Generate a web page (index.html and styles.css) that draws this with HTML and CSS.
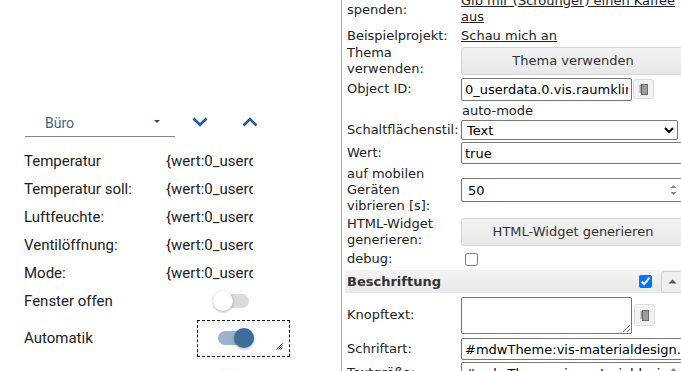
FILE: index.html
```html
<!DOCTYPE html>
<html lang="de">
  <head>
    <meta charset="UTF-8" />
    <meta name="viewport" content="width=device-width, initial-scale=1.0" />
    <title>Raumklima</title>
    <link rel="stylesheet" href="styles.css">
  </head>
  <body>
    <div class="app">
      <!-- Vorschau des Views -->
      <div class="view">
        <div class="room-bar">
          <div class="room-select">
            <span>Büro</span>
            <span class="caret"></span>
          </div>
          <button class="nav-btn">
            <svg width="16" height="10" viewBox="0 0 16 10"><polyline points="1.5,1.5 8,8 14.5,1.5" /></svg>
          </button>
          <button class="nav-btn">
            <svg width="16" height="10" viewBox="0 0 16 10"><polyline points="1.5,8.5 8,2 14.5,8.5" /></svg>
          </button>
        </div>

        <div class="rows">
          <div class="row"><span class="name">Temperatur</span><span class="val">{wert:0_userdata.0.vis.raumklima.buero.temperatur}</span></div>
          <div class="row"><span class="name">Temperatur soll:</span><span class="val">{wert:0_userdata.0.vis.raumklima.buero.soll}</span></div>
          <div class="row"><span class="name">Luftfeuchte:</span><span class="val">{wert:0_userdata.0.vis.raumklima.buero.feuchte}</span></div>
          <div class="row"><span class="name">Ventilöffnung:</span><span class="val">{wert:0_userdata.0.vis.raumklima.buero.ventil}</span></div>
          <div class="row"><span class="name">Mode:</span><span class="val">{wert:0_userdata.0.vis.raumklima.buero.mode}</span></div>
          <div class="row"><span class="name">Fenster offen</span><span class="switch switch-free"></span></div>
          <div class="row row-tall">
            <span class="name">Automatik</span>
            <div class="widget-sel">
              <span class="switch on"></span>
              <svg class="grip" width="7" height="7" viewBox="0 0 7 7"><path d="M6.5 0.5 L0.5 6.5 M6.5 2.5 L2.5 6.5 M6.5 4.5 L4.5 6.5" /></svg>
            </div>
          </div>
          <div class="row row-last"><span class="name">Sperre über Fenster</span><span class="switch switch-last"></span></div>
        </div>
      </div>

      <!-- Widget-Eigenschaften -->
      <div class="inspector">
        <div class="attrs">
          <div class="attr attr-donate">
            <span class="label">Entwickler spenden:</span>
            <span class="value"><a href="#">Gib mir (Scrounger) einen Kaffee aus</a></span>
          </div>
          <div class="attr attr-link">
            <span class="label">Beispielprojekt:</span>
            <span class="value"><a href="#">Schau mich an</a></span>
          </div>
          <div class="attr attr-button">
            <span class="label">Thema verwenden:</span>
            <span class="value"><button class="ui-btn">Thema verwenden</button></span>
          </div>
          <div class="attr attr-oid">
            <span class="label">Object ID:</span>
            <span class="value">
              <input class="field field-short" value="0_userdata.0.vis.raumklima.buero.automatik">
              <button class="pick-btn">
                <svg width="9" height="11" viewBox="0 0 9 11"><rect x="2.5" y="0.5" width="6" height="10" fill="#9c9c9c" stroke="#6a6a6a" /><path d="M0.5 2 H2.5 M0.5 4 H2.5 M0.5 6 H2.5 M0.5 8 H2.5" stroke="#555" /></svg>
              </button>
            </span>
          </div>
          <div class="attr attr-note">
            <span class="label"></span>
            <span class="value note">auto-mode</span>
          </div>
          <div class="attr attr-select">
            <span class="label">Schaltflächenstil:</span>
            <span class="value">
              <select class="field-select"><option>Text</option><option>Icon</option></select>
            </span>
          </div>
          <div class="attr attr-input">
            <span class="label">Wert:</span>
            <span class="value"><input class="field" value="true"></span>
          </div>
          <div class="attr attr-three">
            <span class="label">auf mobilen Geräten vibrieren [s]:</span>
            <span class="value">
              <span class="spin">
                <input class="field field-num" value="50">
                <svg class="spinner" width="7" height="12" viewBox="0 0 7 12"><path d="M0.5 4 L3.5 1 L6.5 4 Z M0.5 8 L3.5 11 L6.5 8 Z" /></svg>
              </span>
            </span>
          </div>
          <div class="attr attr-gen">
            <span class="label">HTML-Widget generieren:</span>
            <span class="value"><button class="ui-btn">HTML-Widget generieren</button></span>
          </div>
          <div class="attr attr-check">
            <span class="label">debug:</span>
            <span class="value"><input class="check" type="checkbox"></span>
          </div>

          <div class="group">
            <span class="group-title">Beschriftung</span>
            <input class="check" type="checkbox" checked>
            <button class="group-btn">
              <svg width="9" height="5" viewBox="0 0 9 5"><path d="M0.5 4.5 L4.5 0.5 L8.5 4.5 Z" /></svg>
            </button>
          </div>

          <div class="attr attr-area">
            <span class="label">Knopftext:</span>
            <span class="value">
              <textarea class="field-area"></textarea>
              <button class="pick-btn pick-tall">
                <svg width="9" height="11" viewBox="0 0 9 11"><rect x="2.5" y="0.5" width="6" height="10" fill="#9c9c9c" stroke="#6a6a6a" /><path d="M0.5 2 H2.5 M0.5 4 H2.5 M0.5 6 H2.5 M0.5 8 H2.5" stroke="#555" /></svg>
              </button>
            </span>
          </div>
          <div class="attr attr-input">
            <span class="label">Schriftart:</span>
            <span class="value"><input class="field" value="#mdwTheme:vis-materialdesign.0.fonts.button.text"></span>
          </div>
          <div class="attr attr-input">
            <span class="label">Textgröße:</span>
            <span class="value">
              <span class="spin">
                <input class="field" value="#mdwTheme:vis-materialdesign.0.fontSizes.button.text">
                <svg class="spinner" width="7" height="12" viewBox="0 0 7 12"><path d="M0.5 4 L3.5 1 L6.5 4 Z M0.5 8 L3.5 11 L6.5 8 Z" /></svg>
              </span>
            </span>
          </div>
        </div>
      </div>
    </div>
  </body>
</html>
```

FILE: styles.css
```css
* {
  margin: 0;
  padding: 0;
  box-sizing: border-box;
}

body {
  background-color: #fff;
  color: #222;
  overflow: hidden;
}

.app {
  display: flex;
  height: 371px;
  overflow: hidden;
}

/* linke Seite: View */

.view {
  width: 342px;
  flex: none;
  border-right: 1px solid #a9a9a9;
  padding-top: 107px;
  font-family: Roboto, "Noto Sans", sans-serif;
  font-size: 15px;
  color: #212121;
}

.room-bar {
  display: flex;
  align-items: center;
  height: 30px;
  margin-left: 25px;
}

.room-select {
  width: 150px;
  height: 30px;
  display: flex;
  align-items: center;
  justify-content: space-between;
  padding: 3px 15px 0 20px;
  border-bottom: 1px solid #858585;
  font-size: 14px;
  color: #3f628a;
}

.caret {
  width: 0;
  height: 0;
  margin-top: -4px;
  border-left: 3px solid transparent;
  border-right: 3px solid transparent;
  border-top: 3px solid #2c4a6c;
}

.nav-btn {
  width: 50px;
  height: 30px;
  border: none;
  background: none;
  display: flex;
  align-items: center;
  justify-content: center;
}

.nav-btn svg polyline {
  fill: none;
  stroke: #1f5b95;
  stroke-width: 2.6;
}

.rows {
  margin-top: 10px;
}

.row {
  display: flex;
  align-items: center;
  height: 28px;
  padding-left: 24px;
}

.row-tall {
  height: 46px;
}

.row-last {
  height: 36px;
}

.name {
  width: 142px;
  flex: none;
  white-space: nowrap;
}

.val {
  width: 87px;
  overflow: hidden;
  white-space: nowrap;
}

.switch {
  position: relative;
  width: 36px;
  height: 14px;
  border-radius: 7px;
  background: #dadada;
}

.switch::after {
  content: "";
  position: absolute;
  top: -3px;
  left: 0;
  width: 20px;
  height: 20px;
  border-radius: 50%;
  background: #fff;
  box-shadow: 0 1px 3px rgba(0, 0, 0, 0.35);
}

.switch.on {
  background: #9bb4ce;
}

.switch.on::after {
  left: 16px;
  background: #3e6d9c;
}

.switch-free {
  margin-left: 47px;
}

.switch-last {
  margin-left: 51px;
  background: #a3a3a3;
}

.widget-sel {
  position: relative;
  width: 93px;
  height: 37px;
  margin-left: 31px;
  display: flex;
  align-items: center;
  padding-left: 20px;
  border: 1px dashed #111;
}

.grip {
  position: absolute;
  right: 6px;
  bottom: 6px;
}

.grip path {
  fill: none;
  stroke: #333;
  stroke-width: 1;
}

/* rechte Seite: Eigenschaften */

.inspector {
  flex: 1;
  overflow: hidden;
  font-family: "DejaVu Sans", Verdana, sans-serif;
  font-size: 13px;
  line-height: 16px;
  color: #222;
}

.attrs {
  width: 345px;
  margin-top: -8px;
  padding-left: 4px;
}

.attr {
  display: grid;
  grid-template-columns: 115px 224px;
  grid-template-rows: 100%;
  align-items: center;
}

.label {
  padding-left: 1px;
  padding-right: 1px;
}

.value {
  display: flex;
  align-items: center;
}

.attr-donate {
  height: 34px;
  align-items: end;
}

.attr-donate .label {
  padding-bottom: 8px;
}

.attr-donate .value {
  padding-bottom: 1px;
}

.attr-link { height: 19px; }
.attr-button { height: 31px; }
.attr-oid { height: 26px; }
.attr-note { height: 17px; }
.attr-select { height: 22px; }
.attr-input { height: 24px; }
.attr-three { height: 50px; }
.attr-gen { height: 33px; }
.attr-check { height: 22px; }
.attr-area { height: 44px; }

.value a {
  color: #222;
  text-decoration: underline;
}

.note {
  padding-left: 1px;
}

.ui-btn {
  width: 224px;
  height: 28px;
  border: 1px solid #d3d3d3;
  border-radius: 3px;
  background: linear-gradient(#f3f3f3, #e8e8e8);
  font-family: "DejaVu Sans", Verdana, sans-serif;
  font-size: 13px;
  color: #333;
}

.field {
  width: 224px;
  height: 22px;
  padding: 0 3px;
  border: 1px solid #767676;
  border-radius: 2px;
  font-family: "DejaVu Sans", Verdana, sans-serif;
  font-size: 13px;
  color: #000;
  background: #fff;
}

.field-short {
  width: 171px;
  height: 23px;
}

.field-num {
  height: 24px;
  padding-left: 6px;
}

.spin {
  position: relative;
  display: flex;
}

.spinner {
  position: absolute;
  right: 8px;
  top: 50%;
  margin-top: -6px;
}

.spinner path {
  fill: #8a8a8a;
}

.pick-btn {
  width: 21px;
  height: 20px;
  margin-left: 1px;
  border: 1px solid #dcdcdc;
  border-radius: 3px;
  background: #f2f2f2;
  display: flex;
  align-items: center;
  justify-content: center;
}

.pick-tall {
  height: 22px;
}

.field-select {
  width: 217px;
  height: 20px;
  padding-left: 1px;
  border: 1px solid #767676;
  border-radius: 2px;
  font-family: "DejaVu Sans", Verdana, sans-serif;
  font-size: 13px;
  color: #000;
  background: #fff;
}

.check {
  width: 13px;
  height: 13px;
  margin: 0 0 0 4px;
}

.group {
  display: flex;
  align-items: center;
  height: 23px;
  margin-left: -1px;
  padding-left: 2px;
  padding-right: 4px;
  background: linear-gradient(#f3f3f3, #e9e9e9);
}

.group-title {
  flex: 1;
  font-weight: bold;
  color: #333;
}

.group .check {
  margin: 0 9px 0 0;
}

.group-btn {
  width: 22px;
  height: 22px;
  border: 1px solid #cfcfcf;
  border-radius: 3px;
  background: #efefef;
  display: flex;
  align-items: center;
  justify-content: center;
}

.group-btn path {
  fill: #555;
}

.field-area {
  width: 171px;
  height: 37px;
  border: 1px solid #767676;
  border-radius: 2px;
  font-family: "DejaVu Sans", Verdana, sans-serif;
  font-size: 13px;
  background: #fff;
}

.attr-area .pick-btn {
  margin-left: 2px;
}
```
